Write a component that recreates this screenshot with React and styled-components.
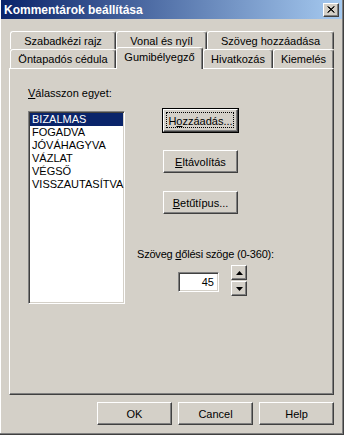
import React from "react";
import styled, { createGlobalStyle } from "styled-components";

const GlobalStyle = createGlobalStyle`
  html, body {
    margin: 0;
    padding: 0;
    background: #d4d0c8;
  }
  body {
    font-family: "Liberation Sans", Arial, sans-serif;
    font-size: 11px;
    color: #000;
  }
  * {
    box-sizing: border-box;
  }
`;

const Window = styled.div`
  width: 344px;
  height: 435px;
  background: #d4d0c8;
  display: flex;
  flex-direction: column;
  border-right: 1px solid #404040;
  border-bottom: 1px solid #404040;
  box-shadow: inset -1px -1px #808080, inset 1px 0 #ffffff;
  overflow: hidden;
`;

const TitleBar = styled.div`
  height: 19px;
  margin: 0 1px 0 1px;
  display: flex;
  align-items: center;
  justify-content: space-between;
  padding: 0 3px 0 3px;
  background: linear-gradient(to right, #0a246a, #a6caf0);
`;

const Title = styled.span`
  color: #fff;
  font-weight: bold;
  font-size: 12px;
`;

const CloseButton = styled.div`
  width: 16px;
  height: 14px;
  background: #d4d0c8;
  border: 1px solid;
  border-color: #ffffff #404040 #404040 #ffffff;
  box-shadow: inset -1px -1px #808080;
  display: flex;
  align-items: center;
  justify-content: center;
`;

const Body = styled.div`
  flex: 1;
  display: flex;
  flex-direction: column;
  padding: 12px 9px 0 9px;
`;

const TabStrip = styled.div`
  display: flex;
  flex-direction: column;
  margin-left: 1px;
`;

const TabRow = styled.div`
  display: flex;
  align-items: flex-end;
  height: ${(p) => p.$h}px;
`;

const Tab = styled.div`
  flex: 0 0 ${(p) => p.$w}px;
  height: ${(p) => (p.$active ? 22 : p.$h)}px;
  margin-bottom: ${(p) => (p.$active ? -1 : 0)}px;
  position: relative;
  z-index: ${(p) => (p.$active ? 2 : 1)};
  background: #d4d0c8;
  border-top: 1px solid #ffffff;
  border-left: 1px solid #ffffff;
  border-right: 1px solid #404040;
  border-radius: 3px 3px 0 0;
  box-shadow: inset -1px 0 #808080;
  display: flex;
  align-items: ${(p) => (p.$active ? "flex-start" : "center")};
  padding-top: ${(p) => (p.$active ? 3 : 0)}px;
  justify-content: center;
  white-space: nowrap;
`;

const Panel = styled.div`
  height: 327px;
  border: 1px solid;
  border-color: #ffffff #404040 #404040 #ffffff;
  box-shadow: inset -1px -1px #808080;
  padding: 18px 0 0 18px;
  display: grid;
  grid-template-columns: 97px 1fr;
  column-gap: 38px;
  align-items: start;
`;

const LeftColumn = styled.div`
  display: flex;
  flex-direction: column;
`;

const Label = styled.div`
  line-height: 13px;
  height: 13px;
  white-space: nowrap;
  margin-left: ${(p) => p.$offset || 0}px;
  letter-spacing: ${(p) => p.$tight ? "-0.2px" : "0"};
`;

const Key = styled.span`
  text-decoration: underline;
`;

const ListBox = styled.div`
  margin-top: 11px;
  width: 97px;
  height: 193px;
  background: #fff;
  border: 1px solid;
  border-color: #808080 #ffffff #ffffff #808080;
  box-shadow: inset 1px 1px #404040, inset -1px -1px #d4d0c8;
  padding: 1px;
`;

const ListItem = styled.div`
  height: 13px;
  line-height: 13px;
  padding-left: 2px;
  white-space: nowrap;
  background: ${(p) => (p.$selected ? "#0a246a" : "transparent")};
  color: ${(p) => (p.$selected ? "#fff" : "#000")};
`;

const RightColumn = styled.div`
  margin-top: 22px;
  display: flex;
  flex-direction: column;
`;

const ButtonStack = styled.div`
  display: flex;
  flex-direction: column;
  gap: 18px;
  margin-bottom: 34px;
`;

const Button = styled.div`
  width: 75px;
  height: 23px;
  position: relative;
  background: #d4d0c8;
  border: 1px solid;
  border-color: #ffffff #404040 #404040 #ffffff;
  box-shadow: ${(p) =>
    p.$default
      ? "0 0 0 1px #000, inset -1px -1px #808080"
      : "inset -1px -1px #808080"};
  display: flex;
  align-items: center;
  justify-content: center;
  white-space: nowrap;

  &::after {
    content: "";
    display: ${(p) => (p.$default ? "block" : "none")};
    position: absolute;
    inset: 2px 3px 3px 2px;
    border: 1px dotted #000;
  }
`;

const SpinRow = styled.div`
  display: flex;
  align-items: flex-start;
  margin-top: 4px;
  padding-left: 15px;
  gap: 12px;
`;

const TextBox = styled.div`
  margin-top: 7px;
  width: 41px;
  height: 20px;
  background: #fff;
  border: 1px solid;
  border-color: #808080 #ffffff #ffffff #808080;
  box-shadow: inset 1px 1px #404040, inset -1px -1px #d4d0c8;
  text-align: right;
  padding-right: 4px;
  line-height: 18px;
`;

const Spinner = styled.div`
  display: flex;
  flex-direction: column;
  gap: 1px;
`;

const SpinButton = styled.div`
  width: 16px;
  height: 15px;
  background: #d4d0c8;
  border: 1px solid;
  border-color: #ffffff #404040 #404040 #ffffff;
  box-shadow: inset -1px -1px #808080;
  display: flex;
  align-items: center;
  justify-content: center;
`;

const Footer = styled.div`
  display: flex;
  justify-content: flex-end;
  gap: 6px;
  margin-top: 7px;
`;

const Triangle = ({ up }) => (
  <svg width="7" height="4" viewBox="0 0 7 4">
    <polygon
      points={up ? "3.5,0 7,4 0,4" : "0,0 7,0 3.5,4"}
      fill="#000"
    />
  </svg>
);

const items = [
  "BIZALMAS",
  "FOGADVA",
  "JÓVÁHAGYVA",
  "VÁZLAT",
  "VÉGSŐ",
  "VISSZAUTASÍTVA",
];

export default function App() {
  return (
    <>
      <GlobalStyle />
      <Window>
        <TitleBar>
          <Title>Kommentárok beállítása</Title>
          <CloseButton>
            <svg width="8" height="7" viewBox="0 0 8 7">
              <path d="M0.5 0.5 L7 6.5 M1.5 0.5 L7.5 6.5 M7 0.5 L0.5 6.5 M7.5 0.5 L1 6.5" stroke="#000" strokeWidth="1" />
            </svg>
          </CloseButton>
        </TitleBar>
        <Body>
          <TabStrip>
            <TabRow $h={18}>
              <Tab $w={106} $h={18}>Szabadkézi rajz</Tab>
              <Tab $w={91} $h={18}>Vonal és nyíl</Tab>
              <Tab $w={127} $h={18}>Szöveg hozzáadása</Tab>
            </TabRow>
            <TabRow $h={19}>
              <Tab $w={106} $h={19}>Öntapadós cédula</Tab>
              <Tab $w={87} $h={19} $active>Gumibélyegző</Tab>
              <Tab $w={70} $h={19}>Hivatkozás</Tab>
              <Tab $w={61} $h={19}>Kiemelés</Tab>
            </TabRow>
          </TabStrip>
          <Panel>
            <LeftColumn>
              <Label>
                <Key>V</Key>álasszon egyet:
              </Label>
              <ListBox>
                {items.map((item, i) => (
                  <ListItem key={item} $selected={i === 0}>
                    {item}
                  </ListItem>
                ))}
              </ListBox>
            </LeftColumn>
            <RightColumn>
              <ButtonStack>
                <Button $default>
                  H<Key>o</Key>zzáadás...
                </Button>
                <Button>
                  <Key>E</Key>ltávolítás
                </Button>
                <Button>
                  <Key>B</Key>etűtípus...
                </Button>
              </ButtonStack>
              <Label $offset={-26} $tight>
                Szöveg <Key>d</Key>őlési szöge (0-360):
              </Label>
              <SpinRow>
                <TextBox>45</TextBox>
                <Spinner>
                  <SpinButton>
                    <Triangle up />
                  </SpinButton>
                  <SpinButton>
                    <Triangle />
                  </SpinButton>
                </Spinner>
              </SpinRow>
            </RightColumn>
          </Panel>
          <Footer>
            <Button>OK</Button>
            <Button>Cancel</Button>
            <Button>Help</Button>
          </Footer>
        </Body>
      </Window>
    </>
  );
}
